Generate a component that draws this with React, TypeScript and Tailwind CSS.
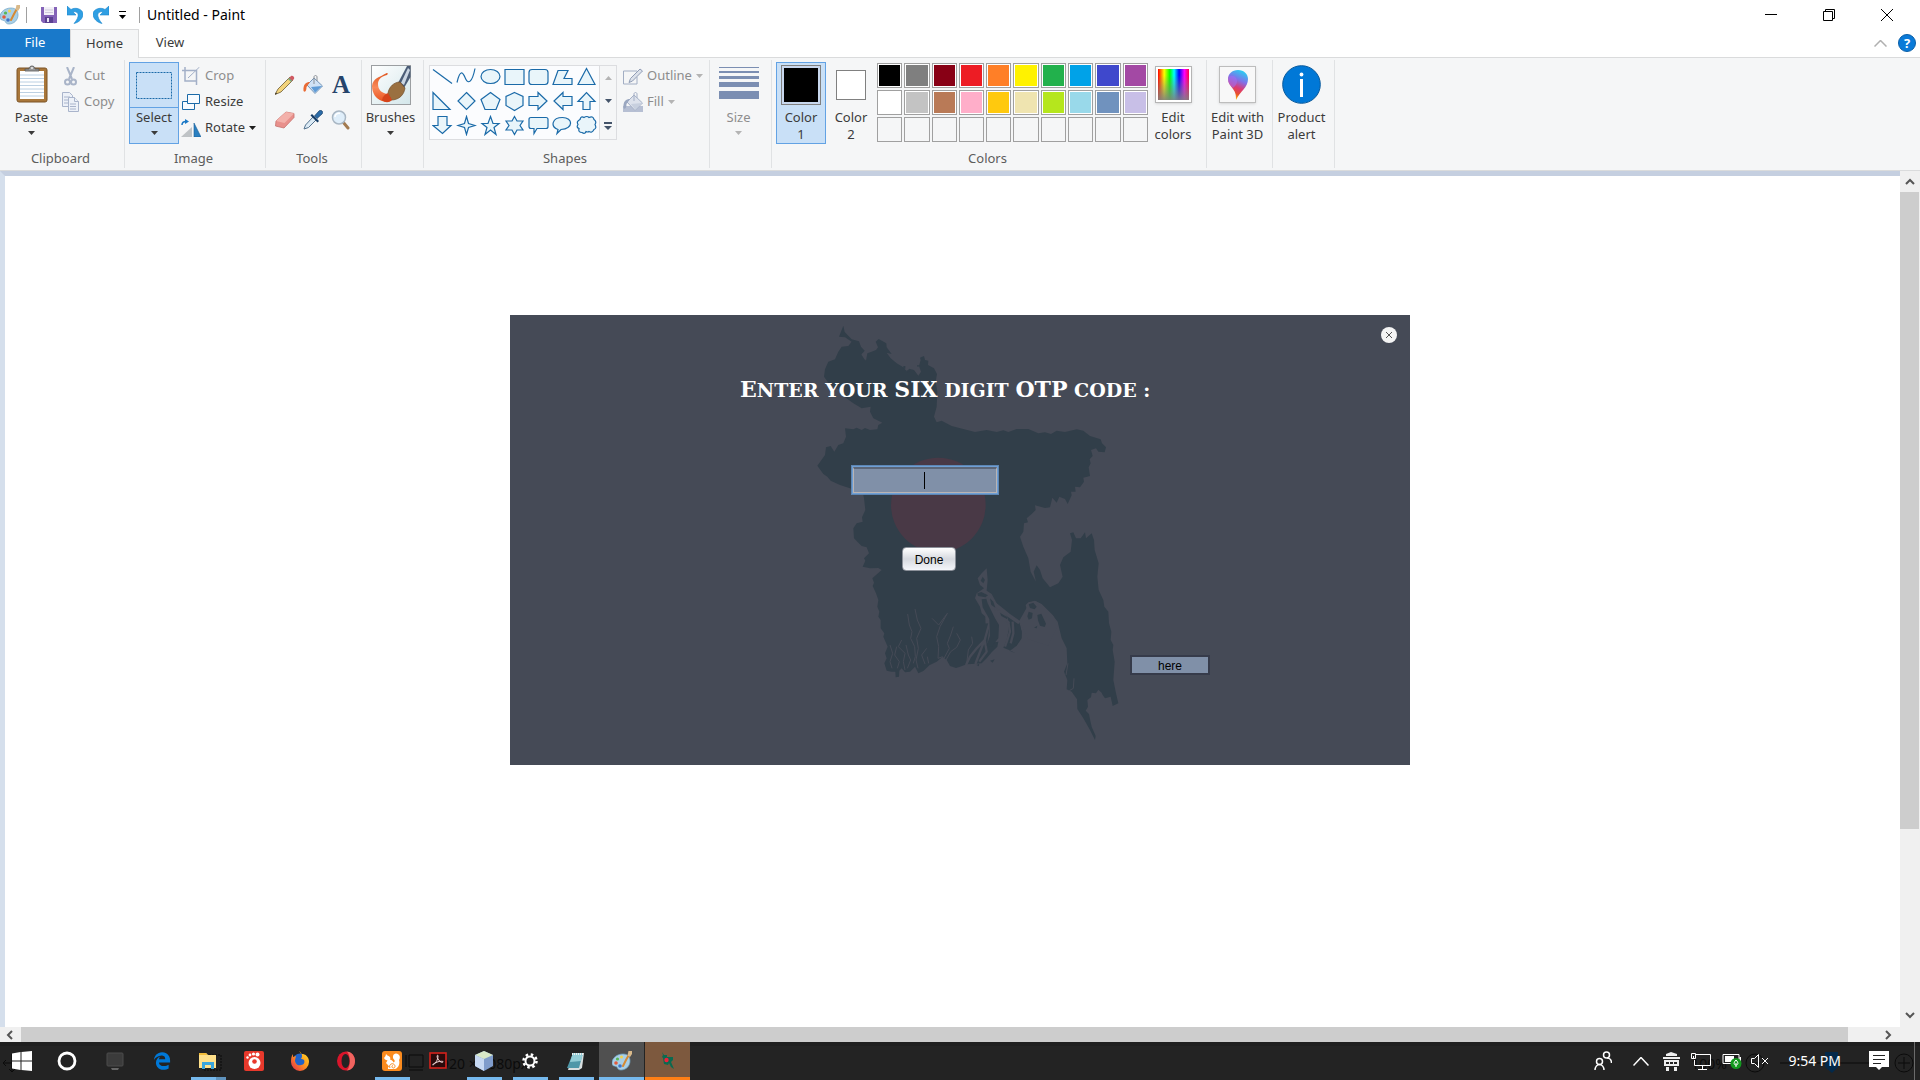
import type { ReactNode } from "react";
import { FaEdgeLegacy } from "react-icons/fa";

const INK = "#1a6aa8";

/* ---------- small shared parts ---------- */

function Caret({ className = "text-[#1e1e1e]" }: { className?: string }) {
  return (
    <svg className={`shrink-0 ${className}`} width="7" height="4" viewBox="0 0 7 4" aria-hidden="true">
      <path d="M0 0h7L3.500 4z" fill="currentColor" />
    </svg>
  );
}

function Group({ label, width, children }: { label?: string; width: string; children: ReactNode }) {
  return (
    <section className={`flex shrink-0 flex-col border-r border-[#e0e2e4] ${width}`}>
      <div className="flex h-[91px] items-start pt-[2px]">{children}</div>
      <div className="pr-[3px] text-center leading-5 text-[#5c5c5c]">{label}</div>
    </section>
  );
}

function SmallButton({ icon, text, muted, arrow }: { icon: ReactNode; text: string; muted?: boolean; arrow?: boolean }) {
  return (
    <button className={`flex h-[26px] items-center gap-1 ${muted ? "text-[#8d8d8d]" : "text-[#3b3b3b]"}`}>
      <span className="flex w-5 justify-center">{icon}</span>
      <span>{text}</span>
      {arrow && <Caret className={muted ? "text-[#b4b4b4]" : "text-[#1e1e1e]"} />}
    </button>
  );
}

/* ---------- icons ---------- */

function PaletteIcon({ size }: { size: number }) {
  return (
    <svg width={size} height={size} viewBox="0 0 20 20" aria-hidden="true">
      <path d="M0 12C0 7 5 3 11 3c5 0 7 3 7 7 0 5-4 9-9 9-4 0-3-3-5-3.500S0 15 0 12z" fill="#a8cfe6" stroke="#6fa3c4" strokeWidth=".7" />
      <circle cx="4" cy="12" r="1.800" fill="#e25b3c" />
      <circle cx="5.500" cy="8" r="1.600" fill="#59b653" />
      <circle cx="9.500" cy="6" r="1.500" fill="#f3d24c" />
      <circle cx="8" cy="15" r="1.800" fill="#3f73c8" />
      <path d="M18.500 1L14 9l-3 6" stroke="#d58a34" strokeWidth="2" fill="none" strokeLinecap="round" />
      <path d="M16.500 0h3.500v3l-2 3-2.500-1.500z" fill="#d9b98a" />
    </svg>
  );
}

function SaveIcon() {
  return (
    <svg width="16" height="16" viewBox="0 0 16 16" aria-hidden="true">
      <path d="M0 0h16v16H2l-2-2z" fill="#8463b8" />
      <path d="M3 0h10v8H3z" fill="#f2f0f7" />
      <path d="M4 3h8M4 5.500h8" stroke="#cfc9dd" />
      <path d="M4 10h8v6H4z" fill="#5b4191" />
      <path d="M6 11h2v4H6z" fill="#e9e4f3" />
    </svg>
  );
}

function UndoIcon({ flip }: { flip?: boolean }) {
  return (
    <svg width="16" height="18" viewBox="0 0 16 18" className={flip ? "-scale-x-100" : ""} aria-hidden="true">
      <path d="M0 0v9h9L6 6c3-1 6 1 5 4.500C10.500 13 9 15 7 17.500c5-1 9-5 9-9.500C16 3.500 9 .5 4 3.500z" fill="#2f9fe3" stroke="#1b87cd" strokeWidth=".6" />
    </svg>
  );
}

function ClipboardIcon() {
  return (
    <svg width="32" height="38" viewBox="0 0 32 38" aria-hidden="true">
      <rect x="1" y="3" width="30" height="34" rx="2" fill="#a9773a" stroke="#7d5526" />
      <path d="M4 6h24v28H4z" fill="#fff" />
      <path d="M4 10h24M4 13.500h24M4 17h24M4 20.500h24M4 24h24M4 27.500h24M4 31h24" stroke="#bcd0e2" />
      <path d="M9 6V4h4c0-4 6-4 6 0h4v2z" fill="#9a9a9a" stroke="#555" strokeWidth=".8" />
      <circle cx="16" cy="3" r="1" fill="#eee" />
    </svg>
  );
}

function CutIcon() {
  return (
    <svg width="13" height="19" viewBox="0 0 13 19" fill="none" stroke="#a9b4c8" aria-hidden="true">
      <path d="M3 0l5 12M10 0L5 12" strokeWidth="2" />
      <circle cx="3.500" cy="15" r="2.500" strokeWidth="2" />
      <circle cx="9.500" cy="15" r="2.500" strokeWidth="2" />
    </svg>
  );
}

function CopyIcon() {
  return (
    <svg width="17" height="20" viewBox="0 0 17 20" fill="#edf1f8" stroke="#a9b4cb" aria-hidden="true">
      <path d="M.5.5h7l3 3v11H.5z" />
      <path d="M2 5h6M2 8h6M2 11h6" />
      <path d="M6.500 5.500h6l4 4v10h-10z" />
      <path d="M12.500 5.500v4h4M8 12h6M8 14.500h6M8 17h6" />
    </svg>
  );
}

function CropIcon() {
  return (
    <svg width="18" height="18" viewBox="0 0 18 18" fill="none" stroke="#a3b0c8" aria-hidden="true">
      <path d="M3 0v14h12" strokeWidth="1.500" />
      <path d="M0 3.500h14.500V18" strokeWidth="1.500" />
      <path d="M17.500 0L6 11" />
    </svg>
  );
}

function ResizeIcon() {
  return (
    <svg width="18" height="16" viewBox="0 0 18 16" fill="#f7fbff" stroke={INK} aria-hidden="true">
      <path d="M.5 7.500h12v8H.5z" />
      <path d="M5.500.5h12v9h-12z" />
    </svg>
  );
}

function RotateIcon() {
  return (
    <svg width="20" height="18" viewBox="0 0 20 18" aria-hidden="true">
      <path d="M0 18L11 8v10z" fill="#bfc3c6" />
      <path d="M13 4v14h7z" fill="#2a7fc0" stroke="#1a5f98" strokeWidth=".6" />
      <path d="M1 6c0-3 2-3.500 4-3.500" fill="none" stroke="#1a78c6" strokeWidth="1.500" />
      <path d="M4 0l4 2.500L4 5z" fill="#1a78c6" />
    </svg>
  );
}

function PencilIcon() {
  return (
    <svg width="20" height="20" viewBox="0 0 20 20" aria-hidden="true">
      <path d="M0 19.500L3 14 15 2l3 3L6 17z" fill="#f3d37b" stroke="#6c5a34" strokeWidth=".8" />
      <path d="M13.500 3.500L16 1c1.500-1 4 1 3 3l-2.500 2.500z" fill="#cf5a62" />
      <path d="M13 4l3 3 1.200-1.200-3-3z" fill="#7ba67d" />
      <path d="M0 19.500l1-2 1 1z" fill="#222" />
    </svg>
  );
}

function BucketIcon({ muted }: { muted?: boolean }) {
  return (
    <svg width="20" height="20" viewBox="0 0 20 20" aria-hidden="true">
      {muted && <path d="M0 14h20v6H0z" fill="#b6bfd3" />}
      <path d="M11 3l8.500 8-7.500 7.500L4 10z" fill={muted ? "#dde2ec" : "#cfe2f5"} stroke={muted ? "#a5b0c6" : "#7495b8"} />
      <path d="M8 12l4 5.500 7-6.500z" fill={muted ? "#c7cfde" : "#5e9bd6"} />
      <path d="M11 9V2c0-2 3-2 3 0v4" fill="none" stroke={muted ? "#a5b0c6" : "#8a8f96"} />
      <path d="M7 7C3 7 0 9 .5 16c2 2 3-1 3-4z" fill={muted ? "#9aa7c0" : "#ea6b35"} />
    </svg>
  );
}

function EraserIcon() {
  return (
    <svg width="20" height="18" viewBox="0 0 20 18" aria-hidden="true">
      <path d="M1 10L11 1l8 1.500v4L9 17 .5 15z" fill="#e8908c" stroke="#c6726e" strokeWidth=".8" />
      <path d="M1 10l8.500 2L19 2.500 11 1z" fill="#f3b1ab" />
    </svg>
  );
}

function PickerIcon() {
  return (
    <svg width="20" height="20" viewBox="0 0 20 20" aria-hidden="true">
      <path d="M1 19l1.500-4L10 7l3 3-7.500 7.500z" fill="#dbeaf5" stroke="#54738f" />
      <path d="M9 4l7 7-1.500 1.500-7-7z" fill="#153c66" />
      <path d="M11.500 6L16 1c2-2 5 1 3 3l-5 4.500z" fill="#2b6ca8" stroke="#153c66" strokeWidth=".7" />
    </svg>
  );
}

function MagnifierIcon() {
  return (
    <svg width="20" height="20" viewBox="0 0 20 20" aria-hidden="true">
      <path d="M12 12l5 6" stroke="#a37b50" strokeWidth="3" strokeLinecap="round" />
      <circle cx="8" cy="7.500" r="6.500" fill="#dfeefa" stroke="#a9b7c4" strokeWidth="1.500" />
      <path d="M4 7c0-3 3-4 5-3.500" stroke="#fff" strokeWidth="1.500" fill="none" />
    </svg>
  );
}

function BrushesIcon() {
  return (
    <svg width="40" height="40" viewBox="0 0 40 40" aria-hidden="true">
      <defs>
        <linearGradient id="brushBg" x1="0" y1="0" x2="1" y2="1">
          <stop offset="0" stopColor="#ffffff" />
          <stop offset="1" stopColor="#d3e6ea" />
        </linearGradient>
        <linearGradient id="brushPaint" x1="0" y1="0" x2="0" y2="1">
          <stop offset="0" stopColor="#e0561f" />
          <stop offset=".5" stopColor="#f98a5a" />
          <stop offset="1" stopColor="#e9521f" />
        </linearGradient>
      </defs>
      <rect x=".5" y=".5" width="39" height="39" fill="url(#brushBg)" stroke="#9b9ea1" />
      <path d="M16 8c1 0 1 1 0 2-5 1-9 4-9 9 0 6 4 9 9 10l3 7c-2 1-5 1-8 0C5 34 1 28 1 21 2 13 9 12 12 10c2-1 3-2 4-2z" fill="url(#brushPaint)" />
      <path d="M27 18L36 1h3.500v11L33 23z" fill="#4a5c76" />
      <path d="M30 18l7-15 2 2-6 15z" fill="#c9d5e2" />
      <path d="M17 28c1-6 6-11 12-11l5 6c-1 7-6 12-14 12z" fill="#9a7040" stroke="#6d4b27" strokeWidth=".7" />
      <path d="M11 35c1-4 3-6 6-7l4 7c-3 3-7 3-10 0z" fill="#d6441a" />
    </svg>
  );
}

function OutlineIcon() {
  return (
    <svg width="20" height="17" viewBox="0 0 20 17" fill="none" aria-hidden="true">
      <path d="M14 3H.5v13H14v-7" stroke="#a2aec4" />
      <path d="M6 14.500l1.500-4L17 1l2.500 2L9.500 13z" fill="#dce1ea" stroke="#8f9cb5" />
    </svg>
  );
}

function SizeIcon() {
  return (
    <svg width="40" height="33" viewBox="0 0 40 33" fill="#7b8eb2" aria-hidden="true">
      <path d="M0 0h40v1H0zM0 4h40v2H0zM0 9h40v3H0zM0 15h40v5H0zM0 24h40v8H0z" />
    </svg>
  );
}

const SHAPES: string[] = [
  "M1 2L20 16",
  "M1 15C5 -2 8 8 10 12S16 16 19 1",
  "M1 9a9.500 7 0 1 0 19 0a9.500 7 0 1 0 -19 0z",
  "M1 2H20V17H1z",
  "M4 2H17Q20 2 20 5V14Q20 17 17 17H4Q1 17 1 14V5Q1 2 4 2z",
  "M6 3H16L12 11H20V17H1z",
  "M10.500 1L19 17H2z",
  "M1 1V18H18z",
  "M10.500 1L19 9.500L10.500 18L2 9.500z",
  "M10.500 1L20 8L16 18H5L1 8z",
  "M10.500 1L19 5V14L10.500 19L2 14V5z",
  "M1 5H10V1L19 9.500L10 18V14H1z",
  "M20 5H11V1L2 9.500L11 18V14H20z",
  "M7 18V10H2L10.500 1L19 10H14V18z",
  "M6 1V10H1L10.500 18L19 10H15V1z",
  "M10.500 1L12.500 8L19 10L12.500 12L10.500 19L8.500 12L2 10L8.500 8z",
  "M10.500 1L13 8H19L14 12L16 19L10.500 14.500L5 19L7 12L2 8H8z",
  "M10.500 1L13 5.500H19L16 10L19 14.500H13L10.500 19L8 14.500H2L5 10L2 5.500H8z",
  "M3 2H18Q20 2 20 4V11Q20 13 18 13H9L6 18V13H3Q1 13 1 11V4Q1 2 3 2z",
  "M6 14C-2 11 0 2 10.500 2S22 13 9 14L5 18z",
  "M4 4Q5 0 8 2Q11 0 13 2Q17 0 18 4Q21 6 19 9Q21 13 18 14Q16 18 13 16Q12 17 10 16Q9 19 6 17Q2 17 3 13Q0 12 2 9Q0 6 4 4z",
];

function EditColorsIcon() {
  return (
    <span className="flex size-[37px] border border-[#b5b5b5] bg-white p-[2px] shadow-sm">
      <span className="size-full bg-[linear-gradient(to_top,rgba(128,128,128,0.9),rgba(128,128,128,0)_80%),linear-gradient(to_right,#f00,#ff0_20%,#0f0_38%,#0ff_52%,#00f_68%,#f0f_85%,#f04)]" />
    </span>
  );
}

function Paint3DIcon() {
  return (
    <span className="flex size-[37px] items-center justify-center border border-[#bdbdbd] bg-[#f8f8f8] shadow-sm">
      <svg width="22" height="32" viewBox="0 0 22 32" aria-hidden="true">
        <defs>
          <linearGradient id="p3d" x1=".7" y1="0" x2=".4" y2="1">
            <stop offset="0" stopColor="#25d3f2" />
            <stop offset=".35" stopColor="#7f72ea" />
            <stop offset=".6" stopColor="#dc3a76" />
            <stop offset=".8" stopColor="#e8502c" />
            <stop offset="1" stopColor="#ffc400" />
          </linearGradient>
        </defs>
        <path d="M11 1c6 0 10 4 10 9 0 9-8 12-12 21 0-4 0-7-3-11S1 14 1 10c0-5 4-9 10-9z" fill="url(#p3d)" />
        <path d="M1 10c0 4 2 6 5 9 4-3 5-7 3-10S2 6 1 10z" fill="#a06ff0" opacity=".6" />
      </svg>
    </span>
  );
}

function AlertIcon() {
  return (
    <svg width="39" height="39" viewBox="0 0 39 39" aria-hidden="true">
      <circle cx="19.500" cy="19.500" r="18.800" fill="#0078d7" stroke="#0a5a9c" />
      <path d="M18 14h3v18h-3z" fill="#fff" />
      <circle cx="19.500" cy="9.500" r="1.900" fill="#fff" />
    </svg>
  );
}

/* ---------- title bar and tabs ---------- */

function TitleBar() {
  return (
    <header className="flex h-[29px] shrink-0 items-center bg-white text-black">
      <PaletteIcon size={20} />
      <span className="ml-[6px] h-4 w-px bg-[#a0a0a0]" />
      <button className="ml-[14px]" aria-label="Save"><SaveIcon /></button>
      <button className="ml-[10px]" aria-label="Undo"><UndoIcon /></button>
      <button className="ml-[10px]" aria-label="Redo"><UndoIcon flip /></button>
      <button className="ml-[10px]" aria-label="Customize Quick Access Toolbar">
        <svg width="7" height="8" viewBox="0 0 7 8" aria-hidden="true"><path d="M0 0h7v1H0zM0 4h7L3.500 8z" /></svg>
      </button>
      <span className="ml-[13px] h-4 w-px bg-[#a0a0a0]" />
      <h1 className="ml-[7px] text-[14px]">Untitled - Paint</h1>
      <div className="ml-auto flex pr-1">
        <button className="flex h-7 w-[58px] items-center justify-center" aria-label="Minimize">
          <svg width="12" height="12" viewBox="0 0 12 12"><path d="M0 5h12v1H0z" /></svg>
        </button>
        <button className="flex h-7 w-[58px] items-center justify-center" aria-label="Restore">
          <svg width="12" height="12" viewBox="0 0 12 12" fill="none" stroke="#000"><path d="M.5 2.500h9v9h-9zM2.500 2.500v-2h9v9h-2" /></svg>
        </button>
        <button className="flex h-7 w-[58px] items-center justify-center" aria-label="Close">
          <svg width="12" height="12" viewBox="0 0 12 12" stroke="#000"><path d="M0 0l12 12M12 0L0 12" /></svg>
        </button>
      </div>
    </header>
  );
}

function Tabs() {
  return (
    <nav className="flex h-[29px] shrink-0 items-stretch border-b border-[#dadbdc] bg-white text-[13px] text-[#3b3b3b]">
      <button className="w-[70px] bg-[#1979ca] text-white">File</button>
      <button className="-mb-px w-[69px] border border-b-0 border-[#dadbdc] bg-[#f5f6f7]">Home</button>
      <button className="w-[62px]">View</button>
      <div className="ml-auto flex items-center gap-[11px] pr-[4px]">
        <button aria-label="Minimize the Ribbon">
          <svg width="13" height="7" viewBox="0 0 13 7" fill="none" stroke="#b0b0b0" strokeWidth="1.500"><path d="M.5 6.500l6-6 6 6" /></svg>
        </button>
        <button className="flex size-[18px] items-center justify-center rounded-full border border-[#0a5fa8] bg-[#0a7ad8] text-[13px] font-bold leading-none text-white" aria-label="Help">?</button>
      </div>
    </nav>
  );
}

/* ---------- ribbon ---------- */

const PALETTE: string[][] = [
  ["#000000", "#7f7f7f", "#880015", "#ed1c24", "#ff7f27", "#fff200", "#22b14c", "#00a2e8", "#3f48cc", "#a349a4"],
  ["#ffffff", "#c3c3c3", "#b97a57", "#ffaec9", "#ffc90e", "#efe4b0", "#b5e61d", "#99d9ea", "#7092be", "#c8bfe7"],
  ["", "", "", "", "", "", "", "", "", ""],
];

function Ribbon() {
  return (
    <div className="flex h-[113px] shrink-0 border-b border-[#dadbdc] bg-[#f5f6f7] py-[2px] text-[13px] text-[#3b3b3b]">
      <Group label="Clipboard" width="w-[125px]">
        <button className="flex w-[60px] flex-col items-center pt-[3px] pl-[3px] leading-[17px]">
          <ClipboardIcon />
          <span className="mt-[6px]">Paste</span>
          <Caret className="mt-[5px]" />
        </button>
        <div className="pt-px">
          <SmallButton icon={<CutIcon />} text="Cut" muted />
          <SmallButton icon={<CopyIcon />} text="Copy" muted />
        </div>
      </Group>
      <Group label="Image" width="w-[141px]">
        <button className="ml-1 flex h-[82px] w-[50px] flex-col items-center border border-[#62a2e4] bg-[#c9e0f7] leading-[17px]">
          <span className="flex h-[45px] w-full items-center justify-center border-b border-[#62a2e4]">
            <svg width="36" height="27" viewBox="0 0 36 27" aria-hidden="true">
              <rect x=".5" y=".5" width="35" height="26" fill="none" stroke={INK} strokeDasharray="2 1" />
            </svg>
          </span>
          <span className="mt-px">Select</span>
          <Caret className="mt-[5px]" />
        </button>
        <div className="ml-[2px] pt-px">
          <SmallButton icon={<CropIcon />} text="Crop" muted />
          <SmallButton icon={<ResizeIcon />} text="Resize" />
          <SmallButton icon={<RotateIcon />} text="Rotate" arrow />
        </div>
      </Group>
      <Group label="Tools" width="w-[96px]">
        <div className="grid grid-cols-3 gap-x-2 gap-y-[15px] pl-[9px] pt-[13px]">
          <button aria-label="Pencil"><PencilIcon /></button>
          <button aria-label="Fill with color"><BucketIcon /></button>
          <button className="size-5 text-center font-['Liberation_Serif',serif] text-[25px] font-bold leading-5 text-[#26446b]" aria-label="Text">A</button>
          <button aria-label="Eraser"><EraserIcon /></button>
          <button aria-label="Color picker"><PickerIcon /></button>
          <button aria-label="Magnifier"><MagnifierIcon /></button>
        </div>
      </Group>
      <Group width="w-[62px]">
        <button className="flex w-full flex-col items-center pt-[3px] pr-1 leading-[17px]">
          <BrushesIcon />
          <span className="mt-[4px]">Brushes</span>
          <Caret className="mt-[5px]" />
        </button>
      </Group>
      <Group label="Shapes" width="w-[286px]">
        <div className="mt-[3px] ml-[5px] flex border border-[#dcdde0] bg-[#fbfcfe]">
          <div className="grid h-[73px] w-[169px] grid-cols-[repeat(7,21px)] content-start gap-[3px] pt-px pl-[2px]">
            {SHAPES.map((d, i) => (
              <button key={i} aria-label={`Shape ${i + 1}`}>
                <svg width="21" height="21" viewBox="0 0 21 20" aria-hidden="true">
                  <path d={d} fill={i < 2 ? "none" : "#e9f5fa"} stroke={INK} strokeWidth="1.200" />
                </svg>
              </button>
            ))}
          </div>
          <div className="flex w-[17px] flex-col items-center justify-around border-l border-[#dcdde0] bg-[#f5f6f7]">
            <button aria-label="Scroll shapes up"><Caret className="rotate-180 text-[#b4b4b4]" /></button>
            <button aria-label="Scroll shapes down"><Caret className="text-[#44546a]" /></button>
            <button aria-label="All shapes">
              <svg width="8" height="8" viewBox="0 0 8 8" fill="#44546a" aria-hidden="true"><path d="M0 0h8v2H0zM0 4h8L4 8z" /></svg>
            </button>
          </div>
        </div>
        <div className="ml-[6px] pt-px">
          <SmallButton icon={<OutlineIcon />} text="Outline" muted arrow />
          <SmallButton icon={<BucketIcon muted />} text="Fill" muted arrow />
        </div>
      </Group>
      <Group width="w-[62px]">
        <button className="flex w-full flex-col items-center pt-[5px] pr-1 leading-[17px] text-[#8d8d8d]">
          <SizeIcon />
          <span className="mt-[9px]">Size</span>
          <Caret className="mt-[5px] text-[#b4b4b4]" />
        </button>
      </Group>
      <Group label="Colors" width="w-[435px]">
        <button className="ml-1 flex h-[82px] w-[50px] flex-col items-center border border-[#62a2e4] bg-[#c9e0f7] pt-[2px] leading-[17px]">
          <span className="size-10 border border-[#808080] bg-black p-px outline-2 -outline-offset-3 outline-[#c9d8ee]" />
          <span className="mt-[4px]">Color</span>
          <span>1</span>
        </button>
        <button className="flex w-[50px] flex-col items-center pt-[8px] leading-[17px]">
          <span className="size-[30px] border border-[#808080] bg-white" />
          <span className="mt-[9px]">Color</span>
          <span>2</span>
        </button>
        <div className="ml-px grid w-[271px] grid-cols-10 gap-[2px] pt-px">
          {PALETTE.flat().map((c, i) => (
            <button key={i} aria-label={`Swatch ${i + 1}`} className={`h-[25px] border border-[#a0a0a0] ${c ? "bg-white p-px" : ""}`}>
              <span className="block size-full" style={{ backgroundColor: c || undefined }} />
            </button>
          ))}
        </div>
        <button className="flex w-[50px] flex-col items-center pt-[4px] leading-[17px]">
          <EditColorsIcon />
          <span className="mt-[6px]">Edit</span>
          <span>colors</span>
        </button>
      </Group>
      <Group width="w-[66px]">
        <button className="flex w-full flex-col items-center pt-[4px] pr-1 leading-[17px] whitespace-nowrap">
          <Paint3DIcon />
          <span className="mt-[6px]">Edit with</span>
          <span>Paint 3D</span>
        </button>
      </Group>
      <Group width="w-[62px]">
        <button className="flex w-full flex-col items-center pt-[3px] pr-1 leading-[17px]">
          <AlertIcon />
          <span className="mt-[5px]">Product</span>
          <span>alert</span>
        </button>
      </Group>
    </div>
  );
}

/* ---------- OTP dialog on the canvas ---------- */

const LAND =
  "M160 47L164 66L185 88L207 94L213 110L224 122L214 134L228 152L232 130L245 125L258 120L264 112L257 95L266 87L289 100L290 112L305 132L290 128L302 145L320 160L340 172L352 186L357 176L372 180L385 197L393 185L387 168L392 150L390 143L402 138L405 150L415 152L414 165L432 175L441 192L437 215L442 245L440 290L432 320L440 337L455 332L485 348L520 357L555 366L590 360L620 366L640 361L655 366L680 357L715 357L745 370L765 367L783 372L800 362L825 366L860 358L880 362L900 378L932 388L936 400L948 412L944 427L925 425L918 415L903 420L908 438L899 448L902 460L896 472L900 498L880 503L882 515L870 532L855 530L857 545L843 545L845 556L833 582L825 567L808 560L800 578L787 563L780 592L765 594L735 586L737 600L725 612L710 625L714 637L702 640L700 665L690 680L700 710L715 745L722 785L738 815L731 785L740 766L750 780L758 805L780 832L805 820L818 800L810 765L820 742L842 725L846 690L840 670L850 667L858 685L872 685L885 667L888 685L905 670L912 690L914 720L926 760L922 800L926 840L940 870L943 890L955 905L957 940L964 965L962 990L970 1005L968 1020L974 1055L970 1110L978 1150L985 1180L968 1188L962 1160L945 1165L938 1155L935 1148L925 1139L918 1150L905 1148L903 1162L892 1170L894 1190L887 1202L897 1212L900 1228L905 1250L917 1278L915 1290L900 1260L880 1225L862 1197L861 1168L845 1145L830 1138L832 1110L822 1085L832 1060L830 1015L815 985L803 935L785 912L765 893L745 878L735 872L715 877L707 885L711 900L702 922L688 937L695 965L695 985L680 1007L660 1022L676 1028L664 1025L657 1020L640 1013L650 990L656 960L654 925L640 905L620 880L605 852L590 842L593 810L590 775L575 790L563 805L570 825L582 835L560 850L555 865L570 890L575 910L592 925L597 960L592 1000L625 995L622 1010L605 1027L590 1045L575 1060L545 1062L530 1063L510 1070L498 1074L480 1068L470 1050L458 1040L440 1055L418 1066L400 1083L385 1090L375 1070L360 1085L345 1087L335 1075L328 1082L327 1100L317 1102L316 1085L304 1085L290 1082L283 1060L290 1045L285 1030L293 1010L280 980L283 970L272 955L272 930L265 920L268 905L262 890L265 870L258 850L248 828L252 818L247 805L258 795L275 780L265 774L240 775L218 770L226 752L222 745L237 730L230 712L215 708L205 698L192 685L190 655L200 640L218 635L216 622L226 600L222 565L220 555L180 535L150 525L122 512L112 500L100 492L82 467L105 435L108 412L122 408L133 425L145 405L160 400L168 380L165 355L190 358L200 353L215 360L225 354L240 360L262 358L265 345L277 338L250 325L240 305L242 290L215 295L190 280L165 262L150 240L120 225L102 200L105 178L115 155L135 148L145 125L155 110L175 108L185 95L165 82L147 80z";

const RIVERS =
  "M353 912L358 945L366 965L362 985L374 1010L376 1040L370 1060M375 897L382 930L393 955L380 985L385 1015L378 1050L384 1075M426 925L446 945L472 910L450 950L440 980L446 1010L444 1045L458 1040M490 950L482 975L472 1000L478 1015L462 1045M500 970L511 990L500 1012L482 1025L468 1050M335 990L325 1010L345 1030L340 1055L345 1080M300 1005L308 1030L300 1055L306 1075M320 1010L314 1035L328 1055L322 1075M348 1005L355 1035L362 1050L352 1075M410 1015L395 1035L405 1062M412 1040L416 1060M545 980L548 1000L535 1020L530 1062";

const DELTA =
  "M592 890L598 940L584 990L560 1015L540 1040L528 1065M586 985L572 1020L556 1062M584 990L590 1025L568 1055M604 860L618 900L640 920L658 940M655 935L660 965L652 990L645 1010M668 935L670 970L662 1000";

function BangladeshMap() {
  return (
    <svg className="absolute inset-0 size-full" viewBox="-840 15 2700 1350" aria-hidden="true">
      <path d={LAND} fill="#313e49" />
      <path d="M340 168h6v8h-6zM382 165h4v5h-4zM350 180l10 4-8 4z" fill="#313e49" />
      <circle cx="445" cy="585" r="142" fill="#493946" />
      <g fill="none" stroke="#454a56" strokeLinejoin="round">
        <path d={RIVERS} strokeWidth="3" />
        <path d={DELTA} strokeWidth="7" />
        <path d="M560 855L590 870L592 940M590 848L612 880L655 915L688 938" strokeWidth="11" />
        <path d="M834 1060L828 1095M852 1105L850 1135L838 1142M218 130L224 148" strokeWidth="3" />
      </g>
      <path d="M715 880l20-8 20 10 35 35 14 30-30 60-60-20-26-55 20-35z" fill="#454a56" />
      <g fill="#313e49">
        <path d="M578 800l7 10-5 10-8-8zM562 850l12-4 20 10-8 6-22-4z" />
        <path d="M716 883l14-5 10 12-6 8-14-4zM716 905l12 4-2 16-10 4-4-10zM742 915l12-4 14 30-4 10-14-4-6-16zM732 953l10-6-2 8z" />
        <path d="M678 940l12 6 5 20-2 20-15 22-8-14 6-26z" />
        <path d="M575 868l14-2 4 14 22 45 12 20-2 40-20 25-15-3 10-30-2-50-20-35z" />
        <path d="M600 865l10 10 6 18-12-8zM630 908l22 14v6l-18-10zM560 1065l8-4-2 8zM600 1052l14-4-6 10z" />
      </g>
    </svg>
  );
}

function Cap({ children }: { children: ReactNode }) {
  return <span className="text-[22px]">{children}</span>;
}

function OtpDialog() {
  return (
    <form className="relative h-[450px] w-[900px] shrink-0 bg-[#454a56] text-black" onSubmit={(e) => e.preventDefault()}>
      <BangladeshMap />
      <div className="relative flex flex-col items-start font-['Liberation_Sans',Arial,sans-serif] text-[12px]">
        <button type="button" className="mt-3 mr-[13px] flex size-4 items-center justify-center self-end rounded-full bg-[#f4f4f4]" aria-label="Close">
          <svg width="6" height="6" viewBox="0 0 6 6" stroke="#555"><path d="M0 0l6 6M6 0L0 6" /></svg>
        </button>
        <label htmlFor="otp" className="mt-[30px] ml-[230px] h-8 font-['DejaVu_Serif',serif] text-[19px] font-bold leading-8 whitespace-nowrap text-white uppercase">
          <Cap>E</Cap>nter your <Cap>SIX</Cap> digit <Cap>OTP</Cap> code :
        </label>
        <div className="relative mt-[60px] ml-[341px] border border-[#5d86b4] bg-[#6f9fd4] p-px">
          <input id="otp" type="text" maxLength={6} className="block h-[26px] w-[144px] border border-t-2 border-[#b9b4b4] border-t-[#5c6678] bg-[#8090a8] text-center outline-none" />
          <span className="absolute top-[6px] left-[72px] h-[17px] w-px bg-black" />
        </div>
        <button type="submit" className="mt-[52px] ml-[392px] h-6 w-[54px] rounded-[4px] border border-[#8b9099] bg-linear-to-b from-white via-[#d6d9df] to-[#f4f6fa] pt-px">
          Done
        </button>
        <input type="text" aria-label="Code" defaultValue="here" className="mt-[84px] ml-[620px] h-5 w-20 border-2 border-[#363b4a] bg-[#8090a8] pt-px text-center" />
      </div>
    </form>
  );
}

/* ---------- canvas with scroll bars ---------- */

function ScrollArrow({ dir, label }: { dir: string; label: string }) {
  return (
    <button className="flex h-[21px] w-5 shrink-0 items-center justify-center pr-px" aria-label={label}>
      <svg width="10" height="10" viewBox="0 0 10 10" fill="none" stroke="#555" strokeWidth="2" className={dir}>
        <path d="M1 7l4-4 4 4" />
      </svg>
    </button>
  );
}

function Workspace() {
  return (
    <main className="flex min-h-0 flex-1 flex-col">
      <div className="flex min-h-0 flex-1">
        <div className="flex min-w-0 flex-1 border-t-5 border-l-5 border-t-[#c5cfe0] border-l-[#d5dfec] bg-white">
          <div className="flex w-full items-start justify-center overflow-hidden pt-[139px] pl-[15px]">
            <OtpDialog />
          </div>
        </div>
        <div className="flex w-5 flex-col bg-[#f0f0f0] pb-[2px]">
          <ScrollArrow dir="" label="Scroll up" />
          <div className="flex min-h-0 flex-1 flex-col">
            <div className="h-[78.4%] w-[19px] bg-[#cdcdcd]" />
          </div>
          <ScrollArrow dir="rotate-180" label="Scroll down" />
        </div>
      </div>
      <div className="flex h-[15px] shrink-0 items-center bg-[#f0f0f0]">
        <ScrollArrow dir="-rotate-90" label="Scroll left" />
        <div className="h-full flex-1 pl-px">
          <div className="h-full w-[98.4%] bg-[#cdcdcd]" />
        </div>
        <div className="pr-[22px]">
          <ScrollArrow dir="rotate-90" label="Scroll right" />
        </div>
      </div>
    </main>
  );
}

/* ---------- taskbar ---------- */

function TaskButton({ label, children, bar, width = "w-[46px]", tile = "" }: { label: string; children: ReactNode; bar?: string; width?: string; tile?: string }) {
  return (
    <button aria-label={label} className={`flex h-full shrink-0 flex-col items-center ${width} ${tile}`}>
      <span className="flex flex-1 items-center pt-[2px]">{children}</span>
      <span className={`h-[3px] ${bar ?? ""}`} />
    </button>
  );
}

/* Status bar of the window that shows faintly through the taskbar. */
function StatusBehind() {
  return (
    <div className="pointer-events-none absolute inset-0 flex items-center border-t-4 border-[#1f1f1f] text-[14px] text-[#0b0b0b]">
      <svg className="ml-[3px]" width="18" height="18" viewBox="0 0 18 18" fill="none" stroke="currentColor"><path d="M0 9h18M9 0v18M3 6L0 9l3 3M6 15l3 3 3-3" /></svg>
      <svg className="ml-[180px]" width="22" height="18" viewBox="0 0 22 18" fill="none" stroke="currentColor"><path d="M2 1h18v15H2z" strokeDasharray="2 1" /></svg>
      <svg className="ml-[182px]" width="20" height="18" viewBox="0 0 20 18" fill="none" stroke="currentColor"><path d="M4 1h14v12H4zM1 1v12M4 16h14" /></svg>
      <span className="ml-2">1920 × 1080px</span>
      <span className="ml-auto">100%</span>
      <svg className="ml-[8px] mr-px" width="184" height="26" viewBox="0 0 184 26" fill="none" stroke="currentColor">
        <circle cx="20" cy="13" r="9" />
        <path d="M15 13h10M45 13h106M163 13h12M169 7v12" />
        <path d="M90 2h13v15l-6 6-7-6z" fill="#03294a" stroke="none" />
        <circle cx="169" cy="13" r="9" />
      </svg>
    </div>
  );
}

function Taskbar() {
  return (
    <footer className="relative h-[38px] shrink-0 bg-[#232323] text-white">
      <StatusBehind />
      <div className="relative flex h-full items-stretch">
        <TaskButton label="Start" width="w-[44px]">
          <svg width="20" height="20" viewBox="0 0 20 20" fill="#fff"><path d="M0 2.500L8.500 1v8.500H0zM9.500 1L20 0v9.500H9.500zM0 10.500h8.500V19L0 17.500zM9.500 10.500H20V20L9.500 19z" /></svg>
        </TaskButton>
        <TaskButton label="Cortana">
          <svg width="20" height="20" viewBox="0 0 20 20"><circle cx="10" cy="10" r="8" fill="none" stroke="#fff" strokeWidth="2.800" /></svg>
        </TaskButton>
        <TaskButton label="Display" width="w-[49px]">
          <svg width="18" height="18" viewBox="0 0 18 18"><rect x="1" y="1" width="16" height="13" rx="1" fill="#3b3b3b" stroke="#4c4c4c" /><path d="M5 16h8l-1 2H6z" fill="#666" /></svg>
        </TaskButton>
        <TaskButton label="Edge"><FaEdgeLegacy className="size-[18px] text-[#0078d7]" /></TaskButton>
        <TaskButton label="File Explorer" bar="w-[35px] border-r-10 border-[#5f93bd] bg-[#76b9ed]">
          <svg width="20" height="18" viewBox="0 0 20 18"><path d="M1 1h7l2 2h8v13H1z" fill="#ffe08a" /><path d="M1 1h7l1.500 2H1z" fill="#f3bd3a" /><path d="M4 17v-7h12v7h-3v-4H7v4z" fill="#3aa5dc" /></svg>
        </TaskButton>
        <TaskButton label="GOM Player">
          <svg width="20" height="20" viewBox="0 0 20 20"><rect width="20" height="20" rx="2" fill="#e8392c" /><circle cx="10.500" cy="12" r="6" fill="#fff" /><circle cx="10.500" cy="10.500" r="2.300" fill="#e8392c" /><g fill="#fff"><circle cx="3.500" cy="6.500" r="1.200" /><circle cx="6" cy="4" r="1.400" /><circle cx="9.500" cy="3" r="1.600" /><circle cx="13.500" cy="3.500" r="2" /></g></svg>
        </TaskButton>
        <TaskButton label="Firefox">
          <svg width="20" height="20" viewBox="0 0 20 20">
            <defs><linearGradient id="fox" x1="1" y1="0" x2="0" y2="1"><stop offset="0" stopColor="#ffe226" /><stop offset=".45" stopColor="#ff9a1e" /><stop offset="1" stopColor="#e3264c" /></linearGradient></defs>
            <circle cx="10" cy="9.500" r="7" fill="#1f62c9" />
            <path d="M9 0c2 2 1 3 4 3 4 1 6 4 6 8a9 9 0 0 1-18 0c0-3 0-5 2-8v3l3-1-1 4c0 4 3 6 6 5 3 0 4-3 3-5-1-1-2-1-3-1 2-3 1-6-2-8z" fill="url(#fox)" />
          </svg>
        </TaskButton>
        <TaskButton label="Opera">
          <svg width="20" height="20" viewBox="0 0 20 20"><ellipse cx="10" cy="10" rx="9" ry="9.500" fill="#d9152b" /><path d="M10 .5c12 0 12 19 0 19 5-1 5-18 0-19z" fill="#f0645f" /><ellipse cx="9.500" cy="10" rx="4" ry="7" fill="#232323" /></svg>
        </TaskButton>
        <TaskButton label="UC Browser" bar="w-[35px] bg-[#76b9ed]">
          <svg width="20" height="20" viewBox="0 0 20 20">
            <rect width="20" height="20" rx="3" fill="#fb8b1e" />
            <path d="M2 7l1.500-2L4 3l1.500 1.500C8 5 9 7 8 8.500c2 .5 3 1.500 3.500 3C13 11 13 9.500 12 8.500c-2-2-1-6 2-6 3.500 0 5 4 3 6.500 1 3 0 8-4 9H6v-1.500l1-1-1.500-2L4 12l1.500-2.500L3 8.500z" fill="#fff" />
            <path d="M8 17c-1.500-3 1.500-5 3.500-4s2 4 0 4-2-2.500-.5-2.500" fill="none" stroke="#fb8b1e" />
          </svg>
        </TaskButton>
        <TaskButton label="Acrobat Reader">
          <svg width="18" height="17" viewBox="0 0 18 17"><rect x="1" y="1" width="16" height="15" fill="#2a0a0b" stroke="#d5221c" strokeWidth="1.600" /><path d="M4 13c2-1 5-5 5-9 0-2-2 0 0 3s4 4 5 3-4-1-7 .5S3 13 4 13z" fill="none" stroke="#f3d9d9" /></svg>
        </TaskButton>
        <TaskButton label="NetBeans" bar="w-[35px] bg-[#76b9ed]">
          <svg width="18" height="20" viewBox="0 0 18 20"><path d="M9 0l9 4v11l-9 5-9-5V4z" fill="#7f9ccb" /><path d="M9 0l9 4-9 4-9-4z" fill="#d8e8c8" /><path d="M0 4l9 4v12l-9-5z" fill="#c6d8f2" /></svg>
        </TaskButton>
        <TaskButton label="Settings" bar="w-[35px] bg-[#76b9ed]">
          <svg width="16" height="16" viewBox="0 0 16 16" fill="none" stroke="#fff"><circle cx="8" cy="8" r="4.500" strokeWidth="2" /><circle cx="8" cy="8" r="6.500" strokeWidth="2.500" strokeDasharray="2.500 2.600" /></svg>
        </TaskButton>
        <TaskButton label="Notepad" bar="w-[35px] bg-[#76b9ed]">
          <svg width="20" height="18" viewBox="0 0 20 18"><path d="M7 1h11l-2 15-3 2H2z" fill="#d8dedf" /><path d="M7 1h10l-4 15H1z" fill="#4f97a8" /><path d="M7 1h10l-2 8-11 1z" fill="#93cdd6" /><path d="M6 2h12" stroke="#eee" strokeWidth="2" strokeDasharray="1 1" /></svg>
        </TaskButton>
        <TaskButton label="Paint" tile="bg-[#505050]" width="w-[45px]" bar="w-full bg-[#76b9ed]"><PaletteIcon size={20} /></TaskButton>
        <TaskButton label="Voting app" tile="ml-px bg-[#7d593e]" width="w-[45px]" bar="w-full bg-[#ff7f16]">
          <svg width="14" height="18" viewBox="0 0 14 18"><path d="M1 0l2 3h3v2h6v3l-2 2 3 7-3-2-2-4-1 2-4-1-1-6-1-1 1-2z" fill="#0b6a50" /><circle cx="5.500" cy="8" r="2.200" fill="#f0203c" /></svg>
        </TaskButton>

        <div className="ml-auto flex items-center">
          <svg width="18" height="20" viewBox="0 0 18 20" fill="none" stroke="#fff" strokeWidth="1.500" aria-label="People"><circle cx="12.500" cy="4" r="3" /><circle cx="5.500" cy="10.500" r="3" /><path d="M17.500 12c0-3-2-5-4.500-5M1 19c0-3 2-5.500 4.500-5.500S10 16 10 19" /></svg>
          <svg className="ml-[21px]" width="16" height="9" viewBox="0 0 16 9" fill="none" stroke="#fff" strokeWidth="1.500" aria-label="Show hidden icons"><path d="M.5 8.500l7.500-8 7.500 8" /></svg>
          <svg className="ml-[14px]" width="17" height="19" viewBox="0 0 17 19" fill="#eee" aria-label="Tray tool"><path d="M3 2l5-2 6 2v2H3zM0 5h17v2H0zM1 8h15v6H1zM3 15h3v4H3zM11 15h3v4h-3z" /><path d="M3 10h3v2H3zM7 10h3v2H7zM11 10h3v2h-3z" fill="#232323" /></svg>
          <svg className="ml-[11px]" width="20" height="17" viewBox="0 0 20 17" fill="none" stroke="#fff" aria-label="Network"><path d="M5 1.500h14.500v11H3.500V7M11.500 13v3M7 16.500h9" /><path d="M.5.5h4v5h-4zM2.500 3v2" fill="#232323" /></svg>
          <svg className="ml-[11px]" width="20" height="16" viewBox="0 0 20 16" aria-label="Battery"><path d="M1 1.500h16v9H1z" fill="none" stroke="#fff" /><path d="M3 3h9v6H3zM17.500 4H19v4h-1.500z" fill="#fff" /><circle cx="14" cy="10.500" r="5.500" fill="#13991f" /><path d="M14 7c3 3 2 5 0 5s-3-2 0-5zM14 10v4" fill="none" stroke="#fff" /></svg>
          <svg className="ml-[9px]" width="18" height="14" viewBox="0 0 18 14" fill="none" stroke="#fff" aria-label="Muted"><path d="M.5 4.500h3l4-4v13l-4-4h-3zM11 4l6 6M17 4l-6 6" /></svg>
          <time className="ml-[19px] text-[14px] leading-5 whitespace-nowrap">9:54 PM</time>
          <svg className="ml-[28px]" width="20" height="20" viewBox="0 0 20 20" aria-label="Notifications"><path d="M0 0h20v16h-7l-3 3-3-3H0z" fill="#fff" /><path d="M4 4.500h12M4 8.500h12M4 12.500h8" stroke="#232323" /></svg>
          <span className="mr-[5px] ml-[25px] h-[38px] w-px bg-[#6b6b6b]" />
        </div>
      </div>
    </footer>
  );
}

export default function App() {
  return (
    <div className="flex h-screen flex-col overflow-hidden bg-white font-['Noto_Sans',sans-serif]">
      <TitleBar />
      <Tabs />
      <Ribbon />
      <Workspace />
      <Taskbar />
    </div>
  );
}
